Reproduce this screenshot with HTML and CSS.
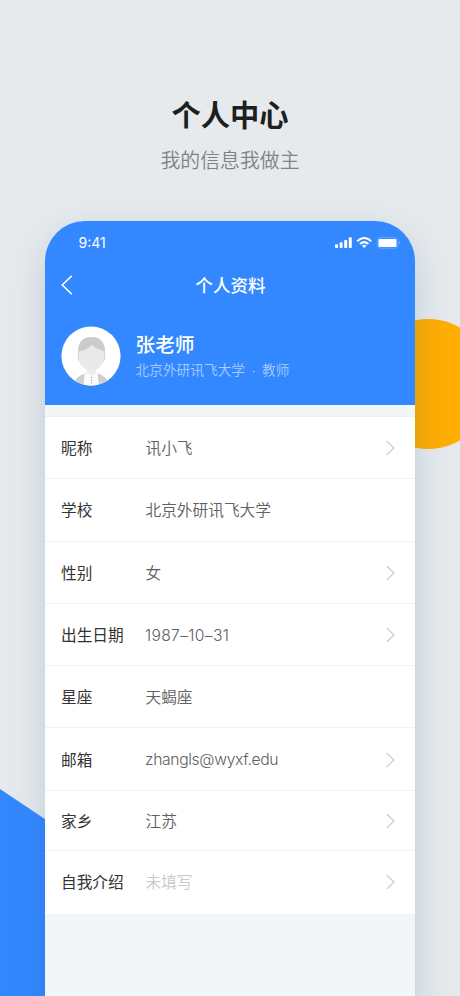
FILE: index.html
```html
<!DOCTYPE html>
<html lang="zh-CN">
<head>
<meta charset="utf-8">
<title>个人中心</title>
<link rel="stylesheet" href="styles.css">
</head>
<body>
<main class="stage">
  <div class="shape-orange"></div>
  <svg class="shape-blue" width="100" height="207" viewBox="0 0 100 207"><path d="M0 0L100 67V207H0Z" fill="#3388ff"/></svg>
  <header class="intro">
    <h1>个人中心</h1>
    <p>我的信息我做主</p>
  </header>
  <section class="phone">
    <div class="top">
      <div class="status">
        <span class="time">9:41</span>
        <svg width="66" height="12" viewBox="0 0 66 12" fill="#fff">
          <rect x="0" y="7.3" width="3" height="3.7" rx=".8"/>
          <rect x="4.6" y="5.2" width="3" height="5.8" rx=".8"/>
          <rect x="9.2" y="2.9" width="3" height="8.1" rx=".8"/>
          <rect x="13.8" y=".3" width="3" height="10.7" rx=".8"/>
          <g fill="none" stroke="#fff" stroke-width="2"><path d="M22.200 4.200Q29.200-2.200 36.200 4.200"/><path d="M25 7Q29.200 3.200 33.400 7"/></g>
          <path d="M26.900 8.700Q29.200 6.900 31.500 8.700L29.200 11Z"/>
          <rect x="42.400" y=".6" width="20.600" height="10.600" rx="2.600" fill="none" stroke="#fff" stroke-opacity=".25"/>
          <rect x="43.500" y="1.900" width="18" height="8" rx="1.200"/>
          <path d="M64 4.200Q66 5.900 64 7.600Z" opacity=".3"/>
        </svg>
      </div>
      <nav class="nav">
        <svg class="back" width="12" height="20" viewBox="0 0 12 20"><path d="M10.800.9L1.200 10L10.800 19.100" fill="none" stroke="#fff" stroke-width="1.500"/></svg>
        <h2>个人资料</h2>
      </nav>
      <div class="profile">
        <svg width="60" height="60" viewBox="0 0 60 60">
          <defs><clipPath id="disc"><circle cx="30" cy="30" r="29.6"/></clipPath></defs>
          <circle cx="30" cy="30" r="29.6" fill="#fff"/>
          <g clip-path="url(#disc)">
            <path d="M12 60Q14 50 25 47L30 53L36 47Q46 50 49 60Z" fill="#cfcfcf"/>
            <path d="M23.500 47L30 50L36.500 47L38 60H22.500Z" fill="#fbfbfb"/>
            <path d="M26 40H35V47L30.500 50L26 47Z" fill="#eee"/>
            <path d="M17 28V22Q19 11 30.500 11Q42 11 44 22V28Q45.500 34 42 36H19Q15.500 34 17 28Z" fill="#d6d6d6"/>
            <ellipse cx="30.400" cy="31" rx="12.800" ry="13.300" fill="#e9e9e9"/>
            <path d="M17.300 25Q18.500 11 30.500 11Q42.500 11 43.700 25Q35 23.500 31 18.500Q26 24.500 17.300 25Z" fill="#cbcbcb"/>
            <g fill="#aaa"><circle cx="30.500" cy="51.500" r=".75"/><circle cx="30.500" cy="54.300" r=".75"/><circle cx="30.500" cy="57" r=".75"/></g>
          </g>
        </svg>
        <div class="who">
          <strong>张老师</strong>
          <span>北京外研讯飞大学<i class="dot">·</i>教师</span>
        </div>
      </div>
    </div>
    <dl class="list">
      <div class="row"><dt>昵称</dt><dd>讯小飞</dd><svg class="chev" viewBox="0 0 9 16"><path d="M.8 1L8 8L.8 15"/></svg></div>
      <div class="row"><dt>学校</dt><dd>北京外研讯飞大学</dd></div>
      <div class="row"><dt>性别</dt><dd>女</dd><svg class="chev" viewBox="0 0 9 16"><path d="M.8 1L8 8L.8 15"/></svg></div>
      <div class="row"><dt>出生日期</dt><dd class="date">1987–10–31</dd><svg class="chev" viewBox="0 0 9 16"><path d="M.8 1L8 8L.8 15"/></svg></div>
      <div class="row"><dt>星座</dt><dd>天蝎座</dd></div>
      <div class="row"><dt>邮箱</dt><dd class="mail">zhangls@wyxf.edu</dd><svg class="chev" viewBox="0 0 9 16"><path d="M.8 1L8 8L.8 15"/></svg></div>
      <div class="row home"><dt>家乡</dt><dd>江苏</dd><svg class="chev" viewBox="0 0 9 16"><path d="M.8 1L8 8L.8 15"/></svg></div>
      <div class="row about"><dt>自我介绍</dt><dd class="empty">未填写</dd><svg class="chev" viewBox="0 0 9 16"><path d="M.8 1L8 8L.8 15"/></svg></div>
    </dl>
  </section>
</main>
</body>
</html>
```
FILE: styles.css
```css
* { box-sizing: border-box; margin: 0; padding: 0; }
body { font-family: "Noto Sans CJK SC", sans-serif; }
svg { display: block; flex: none; }
.stage {
  position: relative;
  width: 460px;
  height: 996px;
  overflow: hidden;
  background: #e6eaed;
}
.shape-orange {
  position: absolute;
  left: 363px;
  top: 319px;
  width: 130px;
  height: 130px;
  border-radius: 50%;
  background: #ffae00;
}
.shape-blue { position: absolute; left: 0; top: 789px; }
.intro { height: 221px; padding-top: 91px; text-align: center; }
.intro h1 { font-size: 29.3px; line-height: 44px; font-weight: 700; color: #1c1e20; }
.intro p { margin-top: 10px; font-size: 19.9px; line-height: 30px; font-weight: 350; color: #808385; }
.phone {
  position: relative;
  width: 370px;
  height: 835px;
  margin: 0 auto;
  border-radius: 40px 40px 0 0;
  background: #f3f6f8;
  box-shadow: 0 14px 36px rgba(40, 80, 130, .2);
  overflow: hidden;
}
.top { height: 184px; background: #3388ff; color: #fff; }
.status {
  display: flex;
  justify-content: space-between;
  align-items: center;
  height: 43px;
  padding: 0 14px 0 33.5px;
}
.time { font: 400 14px/20px Inter, sans-serif; }
.nav { position: relative; height: 41px; display: flex; align-items: center; justify-content: center; }
.back { position: absolute; left: 16px; top: 11px; }
.nav h2 { margin-left: 1px; font-size: 17.6px; line-height: 26px; font-weight: 500; }
.profile { display: flex; align-items: center; gap: 15px; padding: 20.500px 0 0 15.500px; }
.who { display: flex; flex-direction: column; }
.who strong { font-size: 19.7px; line-height: 28px; font-weight: 500; }
.who span { font-size: 13.7px; line-height: 22px; font-weight: 350; color: #a8ccff; }
.dot { display: inline-block; width: 17px; text-align: center; font-style: normal; font-family: "Liberation Sans", sans-serif; }
.list { margin-top: 11px; border-top: 1px solid #edeff1; background: #fff; }
.row {
  display: flex;
  align-items: center;
  height: 62.300px;
  padding: 1px 20px 0 16px;
  border-bottom: 1px solid #f0f2f3;
  font-size: 15.7px;
  line-height: 24px;
}
.row dt { width: 84.5px; color: #333; font-weight: 400; }
.row dd { flex: 1; color: #606060; font-weight: 350; }
.row .date, .row .mail { margin-left: -.5px; padding-top: 1px; font-family: Inter, sans-serif; }
.row .date { letter-spacing: .3px; }
.row .mail { letter-spacing: -.35px; }
.row .empty { color: #c8c8c8; }
.row.home { height: 60.300px; padding-top: 2px; }
.row.about { height: 63.500px; padding-top: 0; }
.chev { width: 9px; height: 16px; fill: none; stroke: #ccc; stroke-width: 1.2; }
```
